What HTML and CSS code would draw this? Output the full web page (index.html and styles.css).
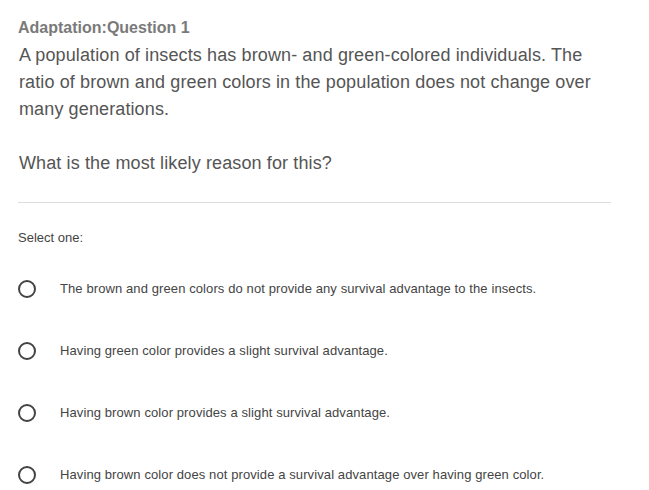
FILE: index.html
```html
<!DOCTYPE html>
<html>
<head>
<meta charset="utf-8">
<link rel="stylesheet" href="styles.css">
</head>
<body>
<div class="page">
  <div class="title">Adaptation:Question 1</div>
  <div class="stem">
    <p>A population of insects has brown- and green-colored individuals. The ratio of brown and green colors in the population does not change over many generations.</p>
    <p class="ask">What is the most likely reason for this?</p>
  </div>
  <hr class="rule">
  <div class="prompt">Select one:</div>
  <div class="options">
    <label class="opt"><span class="radio"></span><span class="txt">The brown and green colors do not provide any survival advantage to the insects.</span></label>
    <label class="opt"><span class="radio"></span><span class="txt">Having green color provides a slight survival advantage.</span></label>
    <label class="opt"><span class="radio"></span><span class="txt">Having brown color provides a slight survival advantage.</span></label>
    <label class="opt"><span class="radio"></span><span class="txt">Having brown color does not provide a survival advantage over having green color.</span></label>
  </div>
</div>
</body>
</html>
```
FILE: styles.css
```css
html, body { margin: 0; padding: 0; background: #fff; }
body { font-family: "Liberation Sans", Arial, sans-serif; color: #555; }
.page { padding: 18px 38px 0 18px; }
.title { font-size: 16px; font-weight: bold; color: #7a7a7a; line-height: 20px; }
.stem { padding-left: 1px; font-size: 18px; letter-spacing: 0.12px; line-height: 27px; color: #555; margin-top: 4px; }
.stem p { margin: 0; }
.stem .ask { margin-top: 27px; }
.rule { border: 0; border-top: 1px solid #ddd; margin: 25px 0 0 0; height: 0; }
.prompt { font-size: 13px; color: #444; margin-top: 27px; line-height: 16px; }
.options { display: flex; flex-direction: column; gap: 44px; margin-top: 34px; }
.opt { display: flex; align-items: center; height: 18px; }
.radio { box-sizing: border-box; width: 18px; height: 18px; border: 2px solid #444; border-radius: 50%; flex: none; }
.txt { margin-left: 24px; font-size: 13px; letter-spacing: 0.1px; color: #444; position: relative; top: -1px; }
```
